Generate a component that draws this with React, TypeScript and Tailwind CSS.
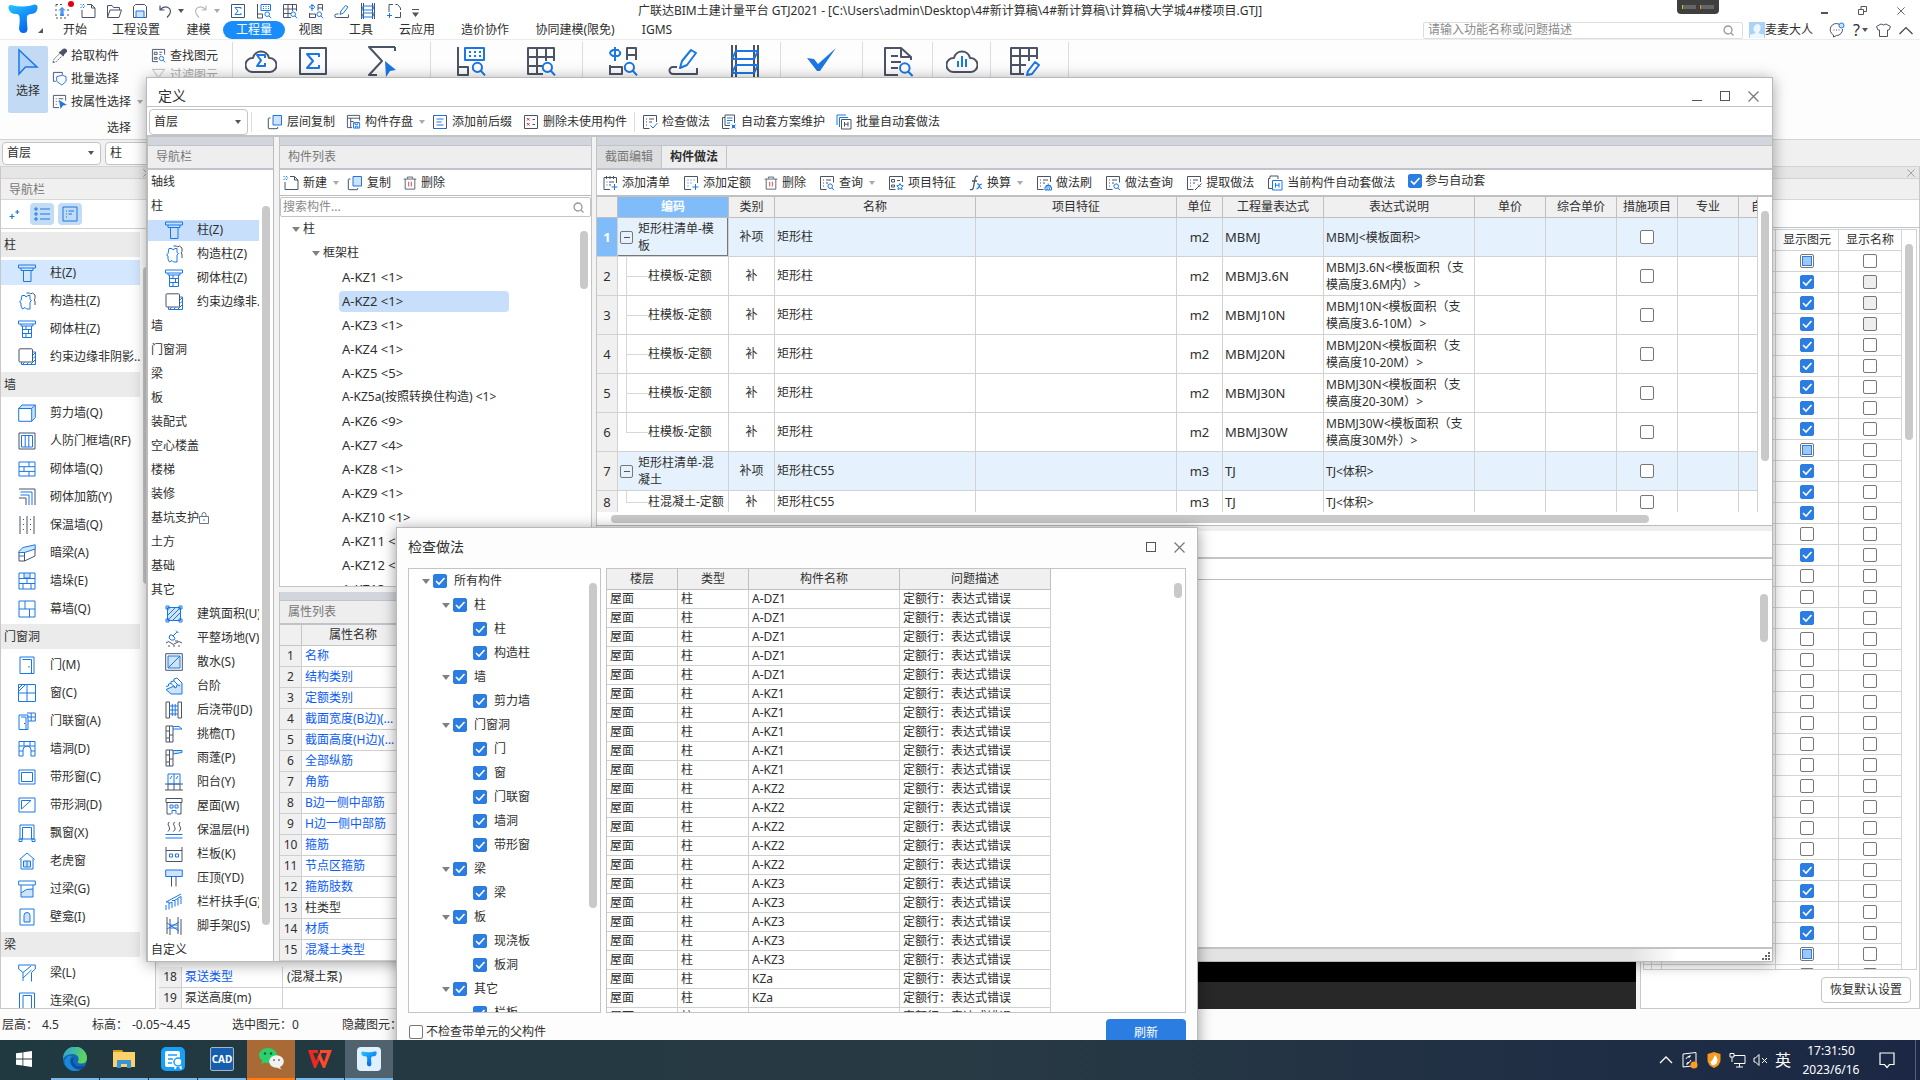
import type { ReactNode } from 'react';

/* ---------- line icons ---------- */

type Glyph = { k?: string; b?: string; f?: string; r?: string; s?: string };

const G: Record<string, Glyph> = {
  // element types, drawn on an 18 x 18 grid
  column: { b: 'M.5 1h17v3H.5zM3 4v2.500h12V4M5.500 6.500V17.500h7.500V6.500' },
  tieColumn: { b: 'M4 3.500h3l1 1.500 2-1.500h2v4l1.500 1-1.500 1.500v4L12 17H8.500L7 15.500 4.500 17 3 14v-3l-1.500-1L3 8.500z', k: 'M8.500 1h3l1 1 2-1L17 3v3.500l-1 1.500 1 1v4' },
  brickColumn: { b: 'M.5 1h17v3H.5zM3 4v2h12V4M4.500 6v11.500h9V6M4.500 9.500h9M4.500 13.500h9M8 6v3.500M10.500 9.500v4M8 13.500v4' },
  edge: { k: 'M2 .8h11.500a1 1 0 0 1 1 1V13a1 1 0 0 1-1 1H2a1 1 0 0 1-1-1V1.800a1 1 0 0 1 1-1z', b: 'M3.500 14v2.500h14V4h-3M4 17l2.500-2.500M8 17l2.500-2.500M12 17l5-5M15 10.500L17.500 8M15 7l2-2' },
  shearWall: { b: 'M.7 4.500h13v12.800h-13zM.7 4.500L4 1h13.300v12.500l-3.600 3.800M13.700 4.500L17.300 1', f: 'M.7 4.500L4 1h13.300v12.500l-3.600 3.800V4.500z' },
  frameWall: { k: 'M1 1h16v16H1z', b: 'M3.500 3.500h11v11.500h-11zM7.200 3.500V15M10.800 3.500V15' },
  brickWall: { b: 'M1 2h16v14H1zM1 6.700h16M1 11.400h16M11 2v4.700M6 6.700v4.700M11 11.400V16' },
  rebarWall: { k: 'M1 1h16v16', b: 'M2.500 4H14v13M2.500 7H11v10', s: 'M1 10h7v7' },
  insulWall: { k: 'M2 0v18M9 0v18M16 0v18', s: 'M5.500 3v1M5.500 8v1M5.500 13v1M12.500 3v1M12.500 8v1M12.500 13v1' },
  hiddenBeam: { k: 'M1 8v9h5.500l10.500-5V5M6.500 8v9', b: 'M.8 7.500L5 3.500 17.200.8V5L6.500 8.500H.8zM1 12h5.500', f: 'M.8 7.500L5 3.500 17.200.8V5L6.500 8.500H.8z' },
  pier: { b: 'M1 1h16v16H1zM6 1v5h6V1M1 6.500h16M1 11.500h16M9 6.500v5M5 11.500v5.500M13 11.500V17', f: 'M6 1h6v5H6z' },
  curtain: { b: 'M1 1h16v16H1zM1 9h16M7 1v8M11.500 9v8' },
  door: { b: 'M2 1h14v16.500H2zM4.500 3.500h9v14', k: 'M11 10v1.500' },
  window: { b: 'M.5.5h17v17H.5zM9 .5v17M.5 9h17M1 7l6-6M1 4l3-3' },
  doorWindow: { b: 'M1 3h9v14.500H1zM3 5h5v12.500M9 1h8.300v8H10M13.200 1v8M9 5h8', k: 'M6.500 11v1' },
  wallHole: { b: 'M1 1.500h16V16h-4V10a4 4 0 0 0-8 0v6H1zM1 6h16M6 1.500V6M12 1.500V6M1 11h4M13 11h4' },
  stripWindow: { b: 'M1 2h16v14H1zM3.500 4.500h11v9h-11z' },
  stripHole: { b: 'M1 2h16v14H1zM3.500 13V4.500H13z' },
  bayWindow: { b: 'M2 1h14v14H2zM4.500 3.500h9V15M4.500 3.500V15M1 15h3v2.500H1zM14 15h3v2.500h-3z' },
  dormer: { b: 'M1.500 7.500L9 1l7.500 6.500M3 7v10h12V7M5.500 9h7v6h-7zM9 9v6', f: 'M5.500 9h7v6h-7z' },
  lintel: { b: 'M.7 1h16.600v4H.7zM3 5v12h12V5M3 13q5-5 12-4', f: 'M3 13q5-5 12-4v8H3z' },
  niche: { b: 'M2 1h14v16H2zM6 14V7.500a3 3 0 0 1 6 0V14z', f: 'M6 14V7.500a3 3 0 0 1 6 0V14z' },
  beam: { b: 'M.7 1h16.600v4L13.500 8.500v9M.7 1v4L5 8.500V17M5 8.500L13 2M5 14l8.500-8' },
  linkBeam: { b: 'M1.500 17.500V1h15v16.500M5 17.500V3.500h8.500v14' },
  area: { b: 'M2.500 2.500h13v13h-13zM1 1h3v3H1zM14 1h3v3h-3zM1 14h3v3H1zM14 14h3v3h-3zM3 10l7-7M3 15L15 3M8 15l7-7', f: 'M2.500 2.500h13v13h-13z' },
  ground: { b: 'M5 6l-1 3 2 2h3l1-2-3-3zM8 7l4-4M11 1.500L13.500 4', k: 'M1 14q3-3 5 0t5 0 6 0M3 17h2M8 17h2M13 17h2M10 12h3' },
  apron: { k: 'M.7.7h16.600v16.600H.7z', b: 'M3 3h12v12H3zM3 15L15 3', f: 'M3 3h12v12H3z' },
  steps: { b: 'M1 9.500l2.500-.5V7L6 6.500v-2L9 4V2l3-1 5 5v11H6l-5-4.500L8 9.500 11 11l1-3.500L15 9M6 6.500L10 10M9 4l3.500 3.500', f: 'M1 12.500l7-3L11 11l1-3.500L17 6v11H6z' },
  pourBand: { k: 'M1 1h3.500v16H1zM13 1h3.500v16H13z', b: 'M4.500 5h8.500M4.500 9h8.500M4.500 13h8.500M7.300 3v12M10.200 3v12' },
  eave: { k: 'M1 1h7v16H1zM4.500 1v16M1 6h3.500M4.500 10H8M1 13h3.500', b: 'M8 1.500h6l3 2.500H8' },
  canopy: { k: 'M1 1h7v16H1zM4.500 1v16M1 6h3.500M4.500 10H8M1 13h3.500', b: 'M8 1.500h9v2L8 5', f: 'M8 1.500h9v2L8 5z' },
  balcony: { b: 'M3 1h12v10H3zM9 1v10M5 6l2-3M11 6l2-3', k: 'M0 11h18M0 17h18M3 11v6M9 11v6M15 11v6' },
  roof: { k: 'M1 1.500h16v4H1zM2 5.500V17M16 5.500V17M2 17h4M12 17h4', b: 'M5 8h3v3H5zM10 8h3v3h-3zM7 17v-3.500h4V17' },
  insulLayer: { k: 'M4 1q-2 2 0 4.500t-1 5M9.500 1q-2 2 0 4.500t-1 5M15 1q-2 2 0 4.500t-1 5', b: 'M.5 13.500h17M.5 17h17' },
  parapet: { k: 'M1 2v14.500h16V2M1 5.500h16', b: 'M4.500 9h3v3h-3zM10.500 9h3v3h-3z' },
  coping: { b: 'M.7 1h16.600v6.500H.7z', f: 'M.7 1h16.600v6.500H.7z', k: 'M6.500 7.500v10M11 7.500v10' },
  handrail: { b: 'M1 9L16 1M1 12v5M1 9h3v7.500M4 10.500L7 9v6M7 7.500h3v6M10 7l3-1.500v7M13 5l3-1.500V11' },
  scaffold: { k: 'M2 0v17M5 2v16M13 0v17M16 2v16', b: 'M2 6l12 8M2 12l12-7M5 8h8M5 11h8' },
  // tool glyphs, drawn on a 16 x 16 grid
  copy: { b: 'M6 1.500h8.500V11H6z', f: 'M6 1.500h8.500V11H6z', k: 'M3.500 4H2a.7.7 0 0 0-.7.7V14a.7.7 0 0 0 .7.700h8a.7.7 0 0 0 .7-.7v-1' },
  newDoc: { k: 'M7 1.500h4.500l3.500 3.500v9.500H2V7M11.500 1.500V5H15', b: 'M.5 1.500h1M3 1.500h1M1.700 3h1M4.200 3h1M.5 4.500h1M3 4.500h1' },
  trash: { k: 'M.8 3.500h14.400M5 3V1.200h6V3M2.500 3.500V15h11V3.500', r: 'M6.500 6.500v5.500M9.500 6.500v5.500' },
  saveComp: { k: 'M14.500 7V1.500h-13v13h5M1.500 4.500h13M5 4.500v10M5 8h3', b: 'M8 9h6.500v6H8zM9.500 9v2h3V9M10 15v-2h2.500v2' },
  affix: { k: 'M3 1.500H1.500v13h13v-13H13', b: 'M3 1.500h10M3 14.500h10M4.500 5h7M4.500 8h5M4.500 11h7' },
  unused: { k: 'M1.500 1.500h13v13h-13zM9.500 5.500H12M9.500 10.500H12', r: 'M4 4l2.500 2.500M6.500 4L4 6.500M4 9l2.500 2.500M6.500 9L4 11.500' },
  checkDoc: { k: 'M14.500 8V1.500h-13v13h6M4 5h1M7 5h5M4 8h1M7 8h3M4 11h1', b: 'M8.500 11.500l2.500 2.500 4.500-5' },
  autoDoc: { k: 'M4 3.500H1.500v11h7M4 1h9.500v8M4 1v10.500h5', b: 'M6 4h5.500M6 6.500h5.500M6 9h3M11.500 11.500h2v2h-2zM11 10.500l3.500 4M14.500 10.500L11 14.500' },
  batch: { b: 'M1 11V1h9M3.500 13V3.500H12', k: 'M5.500 5.500h9.500V15H5.500zM8.500 8v4.500M12 8v4.500M8.500 10.200H12' },
  addList: { k: 'M8 14.500H2V2.500h12.500V8M4.500 1v3M8 1v3M11.500 1v3M4.500 7h1M7 7h5M4.500 10h1M7 10h2', b: 'M12.500 9v6M9.500 12h6' },
  addQuota: { k: 'M8 14.500H1.500v-13h13V8', b: 'M4.500 5h1M7.500 5h1M10.500 5h1M4.500 8h1M7.500 8h1M4.500 11h1M12.500 9v6M9.500 12h6' },
  query: { k: 'M14.500 7.500V1.500h-13v13h6M4 5h1M7 5h5M4 8h1M7 8h2M4 11h1', b: 'M13.500 11.200a2.300 2.300 0 1 1-4.600 0 2.300 2.300 0 0 1 4.600 0zM13 13l2 2.200' },
  feature: { k: 'M14.500 7V1.500h-13v13h6M3.500 4.500h3v2.500h-3zM3.500 10h3v2h-3zM9 5.500h3', b: 'M12 8.500l1 2 2.200.3-1.600 1.500.4 2.200-2-1-2 1 .4-2.200-1.600-1.500 2.200-.3z' },
  brush: { k: 'M14.500 7V1.500h-13v13h6M4 5h1M7 5h5M4 8h1M7 8h2M4 11h1', b: 'M9 12h6.500v3H9zM10 12v-1.500h4.500V12M12.200 10.500V8.500M11 13v2M13.300 13v2' },
  extract: { k: 'M14.500 7V1.500h-13v13h6M4 5h1M7 5h5M4 8h1M7 8h2M4 11h1M9 15l4.500-4.500M12 9.500l2.500 2.500M13.500 10.500L15.500 8.500' },
  autoCur: { k: 'M6 13.500H1.500V3.500H3M3 3.500V1h8v3', b: 'M5.500 5.500h9.500V15H5.500zM8.500 8v4.500M12 8v4.500M8.500 10.200H12' },
  find: { k: 'M14.500 7V1.500h-13v13h6M3.500 4.500h3v2.500h-3zM3.500 10h3v2h-3zM9 4.500h3M9 7h2', b: 'M13.500 11.200a2.300 2.300 0 1 1-4.600 0 2.300 2.300 0 0 1 4.600 0zM13 13l2 2.200' },
  funnel: { k: 'M1.500 1.500h13L9.500 8v6l-3-2V8z' },
  batchSel: { k: 'M4 11H1.500V1.500H11V4', b: 'M5 6l6-1.500L15 6v5l-4.500 4L5 11z' },
  attrSel: { k: 'M14.500 7V1.500h-13v13h6M4 5h1M7 5h5M4 8h1M7 8h1M4 11h1' },
  upload: { k: 'M2 1.500h2M6 1.500h2M2 1.500v2M2 6v2M2 11v2M14 6v2M14 11v2M2 15h2M6 15h2M10 15h2', b: 'M8 13V5M5 7.500L8 4.500l3 3M6 12h4M7 6v7M9 6v7' },
  folder: { k: 'M1.500 14.500V2.500h4.500l1.500 2h6v2.500M1.500 14.500L4 7h11.500L13 14.500z' },
  save: { k: 'M1.500 3.500l2-2h9l2 2v11h-13z', b: 'M4 8h8v6.500H4z', f: 'M4 8h8v6.500H4z' },
  sigma: { k: 'M1.500 1.500h13v13h-13z', b: 'M11 6V4.500H5L8 8l-3 3.500h6V10' },
  gridLook: { k: 'M9 14.500H1.500v-13h13V8M1.500 6h13M1.500 10.500H9M6 1.500v13M10.500 1.500V8', b: 'M13.500 11.200a2.300 2.300 0 1 1-4.600 0 2.300 2.300 0 0 1 4.600 0zM13 13l2 2.200' },
  keyLook: { k: 'M1.500 1v14h5v-4h-5', b: 'M5 1.500h9.500v6H5zM7 3.500h1M9.500 3.500h1M12 3.500h1M7 5.500h1M9.500 5.500h1M12 5.500h1M13.500 11.200a2.300 2.300 0 1 1-4.600 0 2.300 2.300 0 0 1 4.600 0zM13 13l2 2.200' },
  anchorLook: { k: 'M1.500 15v-5M1.500 11h6v3.500h-6M10 7.500V1.500h4.500v6M10 5h4.500', b: 'M4 1v7M6 2.500H3q-3 1.500 0 3h2.500q2-1 .5-2.500M13.500 11.200a2.300 2.300 0 1 1-4.600 0 2.300 2.300 0 0 1 4.600 0zM13 13l2 2.200' },
  pencil: { k: 'M4.500 11H2.500a1.700 1.700 0 0 0 0 3.500h12v-3', b: 'M6 11.500l1-3.500 4.500-5.500L14 4 9.500 10z' },
  ladder: { k: 'M1.500 0v16M3.500 0v16M12.500 0v16M14.500 0v16', b: 'M3.500 3h11M1.500 7h11M3.500 10h11M1.500 14h11M3.500 3l-2 4M14.500 3l-2 4M3.500 10l-2 4M14.500 10l-2 4' },
  frameAdd: { k: 'M3 9V1.500h4M9.500 1.500h2L14.500 5v2M14.500 9v5.500H9', b: 'M3.500 10v5M1 12.500h5' },
  docLook: { k: 'M8 15H1.500V1.500h8L14.500 6v1.500M4.500 5.500h3.500M4.500 8.500h5M4.500 11.500h3.500M9.500 1.500V6h5', b: 'M13.800 11.500a2.400 2.400 0 1 1-4.800 0 2.400 2.400 0 0 1 4.800 0zM13.300 13.500l2 2' },
  cloudSum: { k: 'M3.500 13.500A3.400 3.400 0 0 1 4 6.500a4.100 4.100 0 0 1 8 0 3.400 3.400 0 0 1 .5 7z', b: 'M10 6.500V5H6l2 2.700L6 10.500h4V9' },
  cloudChart: { k: 'M3.500 13.500A3.400 3.400 0 0 1 4 6.500a4.100 4.100 0 0 1 8 0 3.400 3.400 0 0 1 .5 7z', b: 'M6 8v3M8 5.500V11M10 7v4' },
  sumPick: { k: 'M15 1H2l6.500 7L2 15h4M15 1v2' },
  gridPen: { k: 'M8 14.500H1.500v-13h13V7M1.500 5.500h13M1.500 10H9M6 1.500v13M10.500 1.500V8', b: 'M9.500 15l.5-2 3.500-4.500 2 1.500-3.500 4.500z' },
};

function Ico({ n, s = 16, v = 16, faint = false }: { n: string; s?: number; v?: number; faint?: boolean }) {
  const g = G[n];
  return (
    <svg width={s} height={s} viewBox={`0 0 ${v} ${v}`} fill="none" strokeLinejoin="round" className="shrink-0" aria-hidden="true">
      {g.f && <path d={g.f} fill="#cfe4fb" />}
      {g.k && <path d={g.k} stroke={faint ? '#bbb' : '#4b5366'} />}
      {g.s && <path d={g.s} stroke="#4b5366" />}
      {g.b && <path d={g.b} stroke="#1b77e6" />}
      {g.r && <path d={g.r} stroke="#d8343a" />}
    </svg>
  );
}

function Caret({ faint = false }: { faint?: boolean }) {
  return (
    <svg width="6" height="4" viewBox="0 0 6 4" className="shrink-0" aria-hidden="true">
      <path d="M0 0h6L3 4z" fill={faint ? '#aaa' : '#555'} />
    </svg>
  );
}

function TreeArrow() {
  return (
    <svg width="8" height="5" viewBox="0 0 8 5" className="shrink-0" aria-hidden="true">
      <path d="M0 0h8L4 5z" fill="#808080" />
    </svg>
  );
}

function Cross({ s = 11, c = '#777' }: { s?: number; c?: string }) {
  return (
    <svg width={s} height={s} viewBox="0 0 11 11" stroke={c} strokeWidth="1.200" aria-hidden="true">
      <path d="M.5.5l10 10M10.500.5l-10 10" />
    </svg>
  );
}

function Magnifier() {
  return (
    <svg width="11" height="11" viewBox="0 0 11 11" fill="none" stroke="#999" strokeWidth="1.300" aria-hidden="true">
      <circle cx="5" cy="5" r="4" />
      <path d="M8 8l2.500 2.500" />
    </svg>
  );
}

function LogoT({ s }: { s: number }) {
  return (
    <svg width={s} height={s} viewBox="0 0 30 30" aria-hidden="true">
      <defs>
        <linearGradient id={`t${s}`} x1="0" y1="0" x2=".6" y2="1">
          <stop offset="0" stopColor="#27c8fb" />
          <stop offset=".5" stopColor="#1392f8" />
          <stop offset="1" stopColor="#0a63ee" />
        </linearGradient>
      </defs>
      <path d="M3 1q6 1.500 12 1.500T26.500.5q3.500 0 3 4-1 5-6 5.500-4 0-4.500 2.500t.5 12q0 4.500-4 4.500T11 24.500q1-8 .5-11.500T8 10Q2 10 .5 4.500 0 1 3 1z" fill={`url(#t${s})`} />
    </svg>
  );
}

/* ---------- controls ---------- */

type CheckState = 'on' | 'off' | 'part' | 'dim';

function Check({ state, label }: { state: CheckState; label?: string }) {
  return (
    <span className="grid size-3.5 shrink-0">
      <input
        type="checkbox"
        aria-label={label}
        defaultChecked={state === 'on'}
        disabled={state === 'dim'}
        className="col-start-1 row-start-1 size-3.5 appearance-none rounded-xs border border-[#777] bg-white checked:border-[#2b7de1] checked:bg-[#2b7de1] disabled:bg-[#eee]"
      />
      {state === 'on' && (
        <svg viewBox="0 0 14 14" className="pointer-events-none col-start-1 row-start-1 size-3.5" fill="none" stroke="#fff" strokeWidth="1.600" aria-hidden="true">
          <path d="M3 7l3 3 5.500-6" />
        </svg>
      )}
      {state === 'part' && <span className="pointer-events-none col-start-1 row-start-1 m-0.5 border border-[#2b7de1] bg-[#9cc8fb]" />}
    </span>
  );
}

function Tool({ icon, label, caret = false }: { icon: ReactNode; label: string; caret?: boolean }) {
  return (
    <button type="button" className="flex shrink-0 items-center gap-1 whitespace-nowrap">
      {icon}
      <span>{label}</span>
      {caret && (
        <span className="ml-0.5">
          <Caret faint />
        </span>
      )}
    </button>
  );
}

function Select({ label, options, className }: { label: string; options: string[]; className: string }) {
  return (
    <span className={`relative flex items-center rounded-sm border border-[#c4c4c4] bg-white ${className}`}>
      <select aria-label={label} className="h-full w-full appearance-none bg-transparent pl-1 outline-none">
        {options.map((o) => (
          <option key={o}>{o}</option>
        ))}
      </select>
      <span className="pointer-events-none absolute right-1.5">
        <Caret />
      </span>
    </span>
  );
}

/* ---------- main window ---------- */

const quick = ['upload', 'newDoc', 'folder', 'save'];
const quick2 = ['sigma', 'keyLook', 'gridLook', 'anchorLook', 'pencil', 'ladder', 'frameAdd'];

function TitleBar() {
  return (
    <header className="flex h-10 shrink-0 border-b border-[#ececec] bg-white">
      <div className="flex w-[52px] items-start pt-1 pl-2">
        <LogoT s={30} />
        <svg width="5" height="5" viewBox="0 0 5 5" className="mt-6" aria-hidden="true">
          <path d="M5 0v5H0z" fill="#555" />
        </svg>
      </div>
      <div className="flex min-w-0 flex-1 flex-col">
        <div className="flex h-[22px] items-center">
          <div className="flex w-[586px] shrink-0 items-center gap-2.5 pl-0.5">
            {quick.map((q) => (
              <button key={q} type="button" aria-label={q} className="relative">
                <Ico n={q} />
                {q === 'upload' && <span className="absolute -top-0.5 -right-1 size-1.5 rounded-full bg-red-600" />}
              </button>
            ))}
            <button type="button" aria-label="undo" className="flex items-center gap-1.5">
              <svg width="14" height="14" viewBox="0 0 14 14" fill="none" stroke="#4b5366" strokeWidth="1.200" aria-hidden="true">
                <path d="M2 1.500v4.500h4.500M2 6q4-4.500 8-2.500t1.500 7L9 13.500" />
              </svg>
              <Caret />
            </button>
            <button type="button" aria-label="redo" className="flex items-center gap-1.5">
              <svg width="14" height="14" viewBox="0 0 14 14" fill="none" stroke="#bbb" strokeWidth="1.200" aria-hidden="true">
                <path d="M12 1.500v4.500H7.500M12 6Q8 1.500 4 3.500t-1.500 7L5 13.500" />
              </svg>
              <Caret faint />
            </button>
            {quick2.map((q) => (
              <button key={q} type="button" aria-label={q}>
                <Ico n={q} />
              </button>
            ))}
            <svg width="7" height="8" viewBox="0 0 7 8" className="mt-1" aria-hidden="true">
              <path d="M0 0h7v1H0zM0 3.500h7L3.500 8z" fill="#555" />
            </svg>
          </div>
          <h1 className="min-w-0 flex-1 truncate">广联达BIM土建计量平台 GTJ2021 - [C:\Users\admin\Desktop\4#新计算稿\4#新计算稿\计算稿\大学城4#楼项目.GTJ]</h1>
          <div className="flex h-3.5 w-[42px] items-center justify-center gap-1 self-start rounded-b bg-[#3f3f3f]">
            <span className="h-1 w-3.5 border-l border-lime-400 bg-[#666]" />
            <span className="h-1 w-3.5 border-l border-orange-400 bg-[#666]" />
          </div>
          <div className="ml-[102px] flex items-center gap-[30px] pr-[15px]">
            <button type="button" aria-label="minimize" className="mt-1 h-0.5 w-[7px] bg-[#555]" />
            <button type="button" aria-label="restore">
              <svg width="9" height="9" viewBox="0 0 9 9" fill="none" stroke="#555" aria-hidden="true">
                <path d="M.5 3.500h5v5h-5zM3 3V.5h5.500v5H6" />
              </svg>
            </button>
            <button type="button" aria-label="close">
              <Cross s={8} c="#555" />
            </button>
          </div>
        </div>
        <div className="flex h-[18px] items-center">
          <nav className="flex items-center">
            {[
              ['开始', 'w-[46px]'],
              ['工程设置', 'w-[76px]'],
              ['建模', 'w-[49px]'],
              ['工程量', 'w-[62px]'],
              ['视图', 'w-[51px]'],
              ['工具', 'w-[50px]'],
              ['云应用', 'w-[62px]'],
              ['造价协作', 'w-[74px]'],
              ['协同建模(限免)', 'w-[106px]'],
              ['IGMS', 'w-[58px]'],
            ].map(([t, w]) => (
              <a
                key={t}
                href="#"
                className={`shrink-0 text-center leading-[18px] whitespace-nowrap ${w} ${t === '工程量' ? 'rounded-full bg-[#188dfa] text-white' : ''}`}
              >
                {t}
              </a>
            ))}
          </nav>
          <div className="flex-1" />
          <label className="flex h-[17px] w-80 items-center rounded-xs border border-[#ddd] pr-2 pl-1">
            <input aria-label="搜索功能" placeholder="请输入功能名称或问题描述" className="min-w-0 flex-1 outline-none placeholder:text-[#8a8a8a]" />
            <Magnifier />
          </label>
          <svg width="16" height="16" viewBox="0 0 16 16" className="ml-1.5" aria-hidden="true">
            <path d="M0 0h16v16H0z" fill="#a9d3fb" />
            <path d="M8 2q4 0 3.500 4T9.500 10q0 2 5.500 2.500V16H1v-3.500Q6.500 12 6.500 10 4 9 4.500 6T8 2z" fill="#eef7ff" />
          </svg>
          <span>麦麦大人</span>
          <div className="ml-4 flex items-center gap-2 pr-[7px]">
            <button type="button" aria-label="message">
              <svg width="16" height="16" viewBox="0 0 16 16" fill="none" stroke="#4b5366" aria-hidden="true">
                <path d="M10 2.200A6 6 0 1 0 4.500 13v2l3-1.500A6 6 0 0 0 13.500 7M4.500 8h1M7 8h1M9.500 8h1" />
                <circle cx="12.500" cy="3.500" r="2.500" stroke="#1b77e6" fill="#cfe4fb" />
              </svg>
            </button>
            <button type="button" aria-label="help" className="flex items-center gap-0.5 text-base">
              ?<Caret />
            </button>
            <button type="button" aria-label="skin">
              <svg width="15" height="14" viewBox="0 0 15 14" fill="none" stroke="#4b5366" aria-hidden="true">
                <path d="M5 1q2.500 2 5 0l4.500 2.500L13 7h-1.500v6.500h-8V7H2L.5 3.500z" />
              </svg>
            </button>
            <button type="button" aria-label="collapse">
              <svg width="14" height="9" viewBox="0 0 14 9" fill="none" stroke="#444" strokeWidth="1.200" aria-hidden="true">
                <path d="M.5 8L7 1.500 13.500 8" />
              </svg>
            </button>
          </div>
        </div>
      </div>
    </header>
  );
}

const groups: { w: string; icons: string[] }[] = [
  { w: 'w-[198px] gap-5 pl-3', icons: ['cloudSum', 'sigma', 'sumPick'] },
  { w: 'w-[152px] gap-[38px] pl-6', icons: ['keyLook', 'gridLook'] },
  { w: 'w-[198px] gap-[29px] pl-6', icons: ['anchorLook', 'pencil', 'ladder'] },
  { w: 'w-[82px] justify-center', icons: ['check'] },
  { w: 'w-[70px] justify-center', icons: ['docLook'] },
  { w: 'w-[58px] justify-center', icons: ['cloudChart'] },
  { w: 'w-[78px] pl-[17px]', icons: ['gridPen'] },
];

function Ribbon() {
  return (
    <div className="flex h-[99px] shrink-0 bg-[#fdfdfd]">
      <div className="flex w-[232px] flex-col">
        <div className="flex h-[74px] pt-1 pl-2">
          <button type="button" className="mt-0.5 flex h-[67px] w-10 flex-col items-center gap-[7px] rounded-xs bg-[#c2daf4] pt-0.5">
            <svg width="22" height="28" viewBox="0 0 22 28" fill="none" stroke="#1b77e6" strokeWidth="1.500" aria-hidden="true">
              <path d="M2 2v24l6.500-7H20z" fill="#b1d4f8" />
            </svg>
            选择
          </button>
          <div className="flex flex-col pl-1 [&>*]:h-[23px]">
            <Tool
              label="拾取构件"
              icon={
                <svg width="15" height="16" viewBox="0 0 16 16" aria-hidden="true">
                  <path d="M1 15l1-3.500L8.500 5l2.500 2.500L4.500 14z" fill="none" stroke="#4b5366" strokeDasharray="2 1" />
                  <path d="M7 4l2-1 2.500-2.500Q14-.5 15.500 1t0 3L13 6.500l-.5 2z" fill="#4b5366" />
                </svg>
              }
            />
            <Tool label="批量选择" icon={<Ico n="batchSel" s={15} />} />
            <Tool
              label="按属性选择"
              caret
              icon={
                <span className="relative">
                  <Ico n="attrSel" s={15} />
                  <svg width="8" height="9" viewBox="0 0 8 9" className="absolute right-0 bottom-0" aria-hidden="true">
                    <path d="M0 0l8 5-4 .5L1.500 9z" fill="#1b77e6" />
                  </svg>
                </span>
              }
            />
          </div>
          <div className="flex flex-col pl-2 [&>*]:h-[23px]">
            <Tool label="查找图元" icon={<Ico n="find" s={15} />} />
            <span className="text-[#aaa]">
              <Tool label="过滤图元" icon={<Ico n="funnel" s={15} faint />} />
            </span>
          </div>
        </div>
        <div className="pt-1.5 pl-[107px]">选择</div>
      </div>
      {groups.map((g) => (
        <div key={g.icons[0]} className={`mt-0.5 flex h-[92px] items-start border-l border-[#ddd] pt-[3px] ${g.w}`}>
          {g.icons.map((i) => (
            <button key={i} type="button" aria-label={i} className={i === 'sumPick' ? 'relative ml-4' : ''}>
              {i === 'check' ? (
                <svg width="32" height="28" viewBox="0 0 32 28" aria-hidden="true">
                  <path d="M1 13l7 1 4 5L30 3 14 26h-3z" fill="#1b77e6" />
                </svg>
              ) : (
                <Ico n={i} s={32} />
              )}
              {i === 'sumPick' && (
                <svg width="13" height="16" viewBox="0 0 13 16" className="absolute right-0 bottom-0" aria-hidden="true">
                  <path d="M1 0l11 9-6 1-4 6z" fill="#1b77e6" />
                </svg>
              )}
            </button>
          ))}
        </div>
      ))}
      <div className="mt-0.5 h-[92px] border-l border-[#ddd]" />
    </div>
  );
}

type Item = [string, string];
const mainNav: { title: string; items: Item[] }[] = [
  { title: '柱', items: [['column', '柱(Z)'], ['tieColumn', '构造柱(Z)'], ['brickColumn', '砌体柱(Z)'], ['edge', '约束边缘非阴影..']] },
  {
    title: '墙',
    items: [['shearWall', '剪力墙(Q)'], ['frameWall', '人防门框墙(RF)'], ['brickWall', '砌体墙(Q)'], ['rebarWall', '砌体加筋(Y)'], ['insulWall', '保温墙(Q)'], ['hiddenBeam', '暗梁(A)'], ['pier', '墙垛(E)'], ['curtain', '幕墙(Q)']],
  },
  {
    title: '门窗洞',
    items: [['door', '门(M)'], ['window', '窗(C)'], ['doorWindow', '门联窗(A)'], ['wallHole', '墙洞(D)'], ['stripWindow', '带形窗(C)'], ['stripHole', '带形洞(D)'], ['bayWindow', '飘窗(X)'], ['dormer', '老虎窗'], ['lintel', '过梁(G)'], ['niche', '壁龛(I)']],
  },
  { title: '梁', items: [['beam', '梁(L)'], ['linkBeam', '连梁(G)']] },
];

function MainNav() {
  return (
    <aside className="flex w-[156px] shrink-0 flex-col border-x border-b border-[#c8c8c8] bg-white">
      <div className="flex h-3 shrink-0 items-center justify-end border-b border-[#d4d4d4] bg-[#e6e6e6] pr-1">
        <Cross s={8} c="#999" />
      </div>
      <h2 className="h-[21px] shrink-0 border-b border-[#d8d8d8] bg-[#f0f0f0] pl-2 leading-[21px] text-[#777]">导航栏</h2>
      <div className="flex h-[29px] shrink-0 items-center gap-1 border-b border-[#d0d0d0] pl-px">
        <button type="button" aria-label="add" className="flex w-6 justify-center">
          <svg width="11" height="11" viewBox="0 0 11 11" stroke="#1b77e6" strokeWidth="1.200" aria-hidden="true">
            <path d="M3 5v5M.5 7.500h5M8.300 1v4M6.300 3h4" />
          </svg>
        </button>
        <button type="button" aria-label="list" className="flex h-[22px] w-6 items-center justify-center rounded-sm bg-[#c2dcf6]">
          <svg width="16" height="14" viewBox="0 0 16 14" fill="none" stroke="#1b77e6" aria-hidden="true">
            <path d="M1 1h2v2H1zM1 6h2v2H1zM1 11h2v2H1zM6 2h10M6 7h10M6 12h10" />
          </svg>
        </button>
        <button type="button" aria-label="detail" className="flex h-[22px] w-6 items-center justify-center rounded-sm bg-[#c2dcf6]">
          <svg width="16" height="16" viewBox="0 0 16 16" fill="none" stroke="#1b77e6" aria-hidden="true">
            <path d="M1 1h14v14H1zM4 5h1M6.500 5H12M4 8h1M6.500 8H10M4 11h1" />
          </svg>
        </button>
      </div>
      <div className="flex min-h-0 flex-1 overflow-hidden pt-[3px]">
        <div className="w-[139px] shrink-0">
          {mainNav.map((g) => (
            <div key={g.title}>
              <h3 className="mb-[3px] h-[25px] bg-[#ebebeb] pl-[3px] leading-[25px]">{g.title}</h3>
              {g.items.map(([icon, t]) => (
                <a key={t} href="#" className={`mb-[3px] flex h-[25px] items-center gap-3.5 overflow-hidden pl-[17px] whitespace-nowrap ${t === '柱(Z)' ? 'bg-[#d3e7fe]' : ''}`}>
                  <Ico n={icon} s={18} v={18} />
                  {t}
                </a>
              ))}
            </div>
          ))}
        </div>
        <div className="mt-[35px] ml-[3px] h-[317px] w-2 rounded-full bg-[#c9c9c9]" />
      </div>
    </aside>
  );
}

const shown: CheckState[] = [
  'part', 'on', 'on', 'on', 'on', 'on', 'on', 'on', 'on', 'part', 'on', 'on', 'on', 'off', 'on', 'off', 'off', 'on',
  'off', 'off', 'off', 'off', 'off', 'off', 'off', 'off', 'off', 'off', 'off', 'on', 'on', 'on', 'on', 'part', 'off',
];

function DisplayPanel() {
  return (
    <aside className="flex w-[280px] shrink-0 flex-col border border-t-0 border-[#c8c8c8] bg-white">
      <div className="flex h-3 shrink-0 items-center justify-end border-b border-[#d4d4d4] bg-[#e6e6e6] pr-1">
        <Cross s={8} c="#999" />
      </div>
      <div className="h-[21px] shrink-0 border-b border-[#d8d8d8] bg-[#f0f0f0]" />
      <div className="h-[28px] shrink-0 border-b border-[#bfc3cc]" />
      <div className="mt-px mr-0.5 mb-0.5 ml-0.5 flex min-h-0 flex-1 overflow-hidden border border-[#d0d0d0]">
        <table className="w-full table-fixed border-separate border-spacing-0 self-start">
          <colgroup>
            <col className="w-2" />
            <col className="w-2.5" />
            <col />
            <col className="w-[63px]" />
            <col className="w-[63px]" />
          </colgroup>
          <thead>
            <tr className="[&>th]:h-[21px] [&>th]:border-r [&>th]:border-b [&>th]:border-[#d4d4d4] [&>th]:p-0 [&>th]:font-normal [&>th]:whitespace-nowrap">
              <th />
              <th />
              <th />
              <th>显示图元</th>
              <th>显示名称</th>
            </tr>
          </thead>
          <tbody>
            {shown.map((s, i) => (
              <tr key={i} className="[&>td]:h-[21px] [&>td]:border-r [&>td]:border-b [&>td]:border-[#d4d4d4] [&>td]:p-0">
                <td />
                <td />
                <td />
                <td>
                  <span className="flex justify-center">
                    <Check state={s} label={`显示图元 ${i + 1}`} />
                  </span>
                </td>
                <td>
                  <span className="flex justify-center">
                    <Check state={i > 0 && i < 4 ? 'dim' : 'off'} label={`显示名称 ${i + 1}`} />
                  </span>
                </td>
              </tr>
            ))}
          </tbody>
        </table>
        <div className="mx-[3px] mt-3.5 h-[196px] w-2 shrink-0 rounded-full bg-[#c9c9c9]" />
      </div>
      <div className="flex shrink-0 justify-end pt-[5px] pr-2 pb-[5px]">
        <button type="button" className="h-[26px] rounded border border-[#c4c4c4] bg-white px-2">
          恢复默认设置
        </button>
      </div>
    </aside>
  );
}

function MainProps() {
  return (
    <section className="ml-[3px] flex w-[300px] shrink-0 flex-col justify-end bg-white">
      <table className="w-full table-fixed border-separate border-spacing-0">
        <colgroup>
          <col className="w-[23px]" />
          <col className="w-[101px]" />
          <col />
        </colgroup>
        <tbody>
          {[
            ['18', '泵送类型', '(混凝土泵)'],
            ['19', '泵送高度(m)', ''],
          ].map(([n, k, v]) => (
            <tr key={n} className="[&>td]:h-[21px] [&>td]:border-r [&>td]:border-b [&>td]:border-[#d0d0d0] [&>td]:p-0">
              <td className="bg-[#f0f0f0] text-center">{n}</td>
              <td>
                <span className={`pl-[3px] ${n === '18' ? 'text-[#0a5cf5]' : ''}`}>{k}</span>
              </td>
              <td>
                <span className="pl-1">{v}</span>
              </td>
            </tr>
          ))}
        </tbody>
      </table>
    </section>
  );
}

/* ---------- 定义 window ---------- */

const defNav: (string | Item)[] = [
  '轴线', '柱', ['column', '柱(Z)'], ['tieColumn', '构造柱(Z)'], ['brickColumn', '砌体柱(Z)'], ['edge', '约束边缘非..'],
  '墙', '门窗洞', '梁', '板', '装配式', '空心楼盖', '楼梯', '装修', '基坑支护', '土方', '基础', '其它',
  ['area', '建筑面积(U)'], ['ground', '平整场地(V)'], ['apron', '散水(S)'], ['steps', '台阶'], ['pourBand', '后浇带(JD)'], ['eave', '挑檐(T)'],
  ['canopy', '雨蓬(P)'], ['balcony', '阳台(Y)'], ['roof', '屋面(W)'], ['insulLayer', '保温层(H)'], ['parapet', '栏板(K)'], ['coping', '压顶(YD)'],
  ['handrail', '栏杆扶手(G)'], ['scaffold', '脚手架(JS)'], '自定义',
];

function PanelHead({ title }: { title: string }) {
  return (
    <div className="shrink-0">
      <div className="h-[9px] border-b border-[#c0c3ca] bg-[#d3d5dc]" />
      <h2 className="h-[24px] border-b-2 border-[#c0c3ca] bg-[#eee] pl-2 leading-[22px] text-[#777]">{title}</h2>
    </div>
  );
}

function DefNav() {
  return (
    <section className="flex w-[127px] shrink-0 flex-col border-x border-[#bbb] bg-white">
      <PanelHead title="导航栏" />
      <div className="flex min-h-0 flex-1 overflow-hidden">
        <div className="w-[111px] shrink-0">
          {defNav.map((e) =>
            typeof e === 'string' ? (
              <div key={`h${e}`} className="flex h-6 items-center pl-[3px]">
                {e}
                {e === '基坑支护' && (
                  <svg width="10" height="12" viewBox="0 0 10 12" fill="none" stroke="#6b7688" aria-hidden="true">
                    <path d="M.5 4.500h9v7h-9zM3 4.500v-2q0-2 2-2t2 2v2M5 7v2" />
                  </svg>
                )}
              </div>
            ) : (
              <a key={e[1]} href="#" className="flex h-6 items-center">
                <span className={`flex h-[21px] w-full items-center gap-3.5 overflow-hidden pl-[17px] whitespace-nowrap ${e[1] === '柱(Z)' ? 'bg-[#c7dffa]' : ''}`}>
                  <Ico n={e[0]} s={18} v={18} />
                  {e[1]}
                </span>
              </a>
            ),
          )}
        </div>
        <div className="mt-9 mb-9 ml-[3px] w-2 rounded-full bg-[#c9c9c9]" />
      </div>
    </section>
  );
}

const comps = ['A-KZ1 <1>', 'A-KZ2 <1>', 'A-KZ3 <1>', 'A-KZ4 <1>', 'A-KZ5 <5>', 'A-KZ5a(按照转换住构造) <1>', 'A-KZ6 <9>', 'A-KZ7 <4>', 'A-KZ8 <1>', 'A-KZ9 <1>', 'A-KZ10 <1>', 'A-KZ11 <1>', 'A-KZ12 <1>', 'A-KZ13 <1>'];
const propNames = ['名称', '结构类别', '定额类别', '截面宽度(B边)(...', '截面高度(H边)(...', '全部纵筋', '角筋', 'B边一侧中部筋', 'H边一侧中部筋', '箍筋', '节点区箍筋', '箍筋肢数', '柱类型', '材质', '混凝土类型'];

function CompColumn() {
  return (
    <div className="mr-1 ml-[5px] flex w-[313px] shrink-0 flex-col">
      <section className="flex h-[450px] flex-col border-x border-b border-[#c4c4c4] bg-white">
        <PanelHead title="构件列表" />
        <div className="flex h-[26px] shrink-0 items-center border-b border-[#bbb] pl-[3px]">
          <Tool icon={<Ico n="newDoc" />} label="新建" caret />
          <div className="w-2" />
          <Tool icon={<Ico n="copy" />} label="复制" />
          <div className="w-3" />
          <Tool icon={<Ico n="trash" s={14} />} label="删除" />
        </div>
        <label className="mt-px flex h-[20px] shrink-0 items-center rounded-xs border border-[#c4c4c4] pr-1.5 pl-0.5">
          <input aria-label="搜索构件" placeholder="搜索构件..." className="min-w-0 flex-1 outline-none placeholder:text-[#8a8a8a]" />
          <Magnifier />
        </label>
        <div className="flex min-h-0 flex-1 justify-between overflow-hidden">
          <ul className="[&>li]:flex [&>li]:h-6 [&>li]:items-center">
            <li className="gap-[3px] pl-3">
              <TreeArrow />柱
            </li>
            <li className="gap-[3px] pl-8">
              <TreeArrow />
              框架柱
            </li>
            {comps.map((c) => (
              <li key={c} className="pl-[59px]">
                <span className={`h-[21px] w-[170px] rounded-sm pl-[3px] leading-5 whitespace-nowrap ${c.length < 12 ? 'text-[13px]' : ''} ${c === 'A-KZ2 <1>' ? 'bg-[#c7dffa]' : ''}`}>{c}</span>
              </li>
            ))}
          </ul>
          <div className="mt-3.5 mr-[3px] h-[58px] w-2 rounded-full bg-[#c9c9c9]" />
        </div>
      </section>
      <section className="mt-[5px] flex min-h-0 flex-1 flex-col overflow-hidden border-x border-[#c4c4c4] bg-white">
        <PanelHead title="属性列表" />
        <table className="w-full table-fixed border-separate border-spacing-0">
          <colgroup>
            <col className="w-[22px]" />
            <col className="w-[103px]" />
            <col />
          </colgroup>
          <thead>
            <tr className="bg-[#f0f0f0] [&>th]:h-[21px] [&>th]:border-r [&>th]:border-b [&>th]:border-[#c6c6c6] [&>th]:p-0 [&>th]:font-normal">
              <th />
              <th>属性名称</th>
              <th>属性值</th>
            </tr>
          </thead>
          <tbody>
            {propNames.map((p, i) => (
              <tr key={p} className="[&>td]:h-[21px] [&>td]:border-r [&>td]:border-b [&>td]:border-[#cfcfcf] [&>td]:p-0">
                <td className="bg-[#f0f0f0] text-center">{i + 1}</td>
                <td className="whitespace-nowrap">
                  <span className={`pl-[3px] ${p === '柱类型' ? '' : 'text-[#0a5cf5]'}`}>{p}</span>
                </td>
                <td />
              </tr>
            ))}
          </tbody>
        </table>
      </section>
    </div>
  );
}

type Row = { parent?: boolean; last?: boolean; code: string; kind: string; name: string; unit: string; expr: string; desc: string };
const rows: Row[] = [
  { parent: true, code: '矩形柱清单-模板', kind: '补项', name: '矩形柱', unit: 'm2', expr: 'MBMJ', desc: 'MBMJ<模板面积>' },
  { code: '柱模板-定额', kind: '补', name: '矩形柱', unit: 'm2', expr: 'MBMJ3.6N', desc: 'MBMJ3.6N<模板面积（支模高度3.6M内）>' },
  { code: '柱模板-定额', kind: '补', name: '矩形柱', unit: 'm2', expr: 'MBMJ10N', desc: 'MBMJ10N<模板面积（支模高度3.6-10M）>' },
  { code: '柱模板-定额', kind: '补', name: '矩形柱', unit: 'm2', expr: 'MBMJ20N', desc: 'MBMJ20N<模板面积（支模高度10-20M）>' },
  { code: '柱模板-定额', kind: '补', name: '矩形柱', unit: 'm2', expr: 'MBMJ30N', desc: 'MBMJ30N<模板面积（支模高度20-30M）>' },
  { last: true, code: '柱模板-定额', kind: '补', name: '矩形柱', unit: 'm2', expr: 'MBMJ30W', desc: 'MBMJ30W<模板面积（支模高度30M外）>' },
  { parent: true, code: '矩形柱清单-混凝土', kind: '补项', name: '矩形柱C55', unit: 'm3', expr: 'TJ', desc: 'TJ<体积>' },
  { last: true, code: '柱混凝土-定额', kind: '补', name: '矩形柱C55', unit: 'm3', expr: 'TJ', desc: 'TJ<体积>' },
];

function PracticeTable() {
  return (
    <table className="w-full table-fixed border-separate border-spacing-0 self-start">
      <colgroup>
        <col className="w-[21px]" />
        <col className="w-[111px]" />
        <col className="w-[46px]" />
        <col className="w-[201px]" />
        <col className="w-[201px]" />
        <col className="w-[46px]" />
        <col className="w-[101px]" />
        <col className="w-[151px]" />
        <col className="w-[71px]" />
        <col className="w-[71px]" />
        <col className="w-[61px]" />
        <col className="w-[61px]" />
        <col />
      </colgroup>
      <thead>
        <tr className="bg-[#f0f0f0] [&>th]:h-[21px] [&>th]:border-r [&>th]:border-b [&>th]:border-[#bfbfbf] [&>th]:p-0 [&>th]:font-normal [&>th]:whitespace-nowrap">
          <th />
          <th className="bg-[#80bbfa] text-white">
            <b>编码</b>
          </th>
          {['类别', '名称', '项目特征', '单位', '工程量表达式', '表达式说明', '单价', '综合单价', '措施项目', '专业'].map((h) => (
            <th key={h}>{h}</th>
          ))}
          <th className="overflow-hidden text-left">
            <span className="pl-3">自</span>
          </th>
        </tr>
      </thead>
      <tbody>
        {rows.map((r, i) => (
          <tr
            key={i}
            className={`[&>td]:border-r [&>td]:border-b [&>td]:border-[#d2d2d2] [&>td]:p-0 ${i === 7 ? '[&>td]:h-[23px]' : '[&>td]:h-[39px]'} ${r.parent ? 'bg-[#e5f2fe]' : 'bg-white'}`}
          >
            <td className={`text-center text-[13px] ${i === 0 ? 'bg-[#80bbfa] font-bold text-white' : 'bg-[#f0f0f0]'}`}>{i + 1}</td>
            <td className={i === 0 ? 'shadow-[inset_-1px_-1px_0_#777]' : ''}>
              {r.parent ? (
                <span className="flex items-center gap-[5px] pl-0.5 leading-[17px]">
                  <button type="button" aria-label="collapse row" className="flex size-[13px] shrink-0 items-center justify-center rounded-xs border border-[#777]">
                    <span className="h-px w-1.5 bg-[#555]" />
                  </button>
                  <span className="w-20">{r.code}</span>
                </span>
              ) : (
                <span className={`flex pl-2 ${i === 7 ? 'h-[22px]' : 'h-[38px]'}`}>
                  <span className="flex w-[22px] shrink-0 flex-col">
                    <span className="flex-1 border-b border-l border-[#d8d8d8]" />
                    <span className={`flex-1 border-[#d8d8d8] ${r.last ? '' : 'border-l'}`} />
                  </span>
                  <span className="self-center whitespace-nowrap">{r.code}</span>
                </span>
              )}
            </td>
            <td className="text-center">{r.kind}</td>
            <td>
              <span className="pl-0.5">{r.name}</span>
            </td>
            <td />
            <td className="text-center text-[13px]">{r.unit}</td>
            <td>
              <span className="pl-0.5 text-[13px]">{r.expr}</span>
            </td>
            <td className="overflow-hidden leading-[17px]">
              <p className="w-[143px] pl-0.5 break-all">{r.desc}</p>
            </td>
            <td />
            <td />
            <td>
              <span className="flex justify-center">
                <Check state="off" label={`措施项目 ${i + 1}`} />
              </span>
            </td>
            <td />
            <td />
          </tr>
        ))}
      </tbody>
    </table>
  );
}

function PracticeColumn() {
  return (
    <section className="flex min-w-0 flex-1 flex-col border-l border-[#c4c4c4] bg-white">
      <div className="h-[9px] shrink-0 border-b border-[#c0c3ca] bg-[#d3d5dc]" />
      <div className="flex h-6 shrink-0 border-b-2 border-[#c0c3ca] bg-[#eee]">
        <button type="button" className="border-r border-[#c4c4c4] bg-[#dcdddf] px-2 text-[#777]">
          截面编辑
        </button>
        <button type="button" className="border-r border-[#c4c4c4] px-2 font-bold">
          构件做法
        </button>
      </div>
      <div className="flex h-[27px] shrink-0 items-center gap-[13px] overflow-hidden border-b-2 border-[#c0c0c0] pl-[5px]">
        <Tool icon={<Ico n="addList" />} label="添加清单" />
        <Tool icon={<Ico n="addQuota" />} label="添加定额" />
        <Tool icon={<Ico n="trash" s={14} />} label="删除" />
        <Tool icon={<Ico n="query" />} label="查询" caret />
        <Tool icon={<Ico n="feature" />} label="项目特征" />
        <Tool
          icon={
            <svg width="14" height="16" viewBox="0 0 14 16" fill="none" aria-hidden="true">
              <path d="M9 1.500Q6.500 0 6 4L4.500 12Q4 15.500 1 14.500M3 6h5" stroke="#4b5366" strokeWidth="1.300" />
              <path d="M8 9q2-.5 2.500 2t2.500 2.500M13 9q-2 0-3 2.500T7.500 14" stroke="#1b77e6" strokeWidth="1.200" />
            </svg>
          }
          label="换算"
          caret
        />
        <Tool icon={<Ico n="brush" />} label="做法刷" />
        <Tool icon={<Ico n="query" />} label="做法查询" />
        <Tool icon={<Ico n="extract" />} label="提取做法" />
        <Tool icon={<Ico n="autoCur" />} label="当前构件自动套做法" />
        <label className="flex items-center gap-[3px] pb-[3px] whitespace-nowrap">
          <Check state="on" />
          参与自动套
        </label>
      </div>
      <div className="flex h-[315px] shrink-0 overflow-hidden">
        <PracticeTable />
        <div className="mt-3.5 mr-[3px] ml-[3px] h-[250px] w-2 shrink-0 rounded-full bg-[#c9c9c9]" />
      </div>
      <div className="h-3.5 shrink-0 border-b border-[#bbb] pt-[3px] pr-[123px] pl-3.5">
        <div className="h-2 rounded-full bg-[#c9c9c9]" />
      </div>
      <div className="h-[5px] shrink-0 bg-[#efefef]" />
      <div className="h-[28px] shrink-0 border-b-2 border-[#c3c5ca]" />
      <div className="h-[21px] shrink-0 border-b border-[#bbb]" />
      <div className="flex flex-1 justify-end pt-3.5 pr-1">
        <div className="h-[48px] w-2 rounded-full bg-[#c9c9c9]" />
      </div>
      <div className="flex h-3.5 shrink-0 items-center justify-end border-t-2 border-[#c3c3c3] bg-gradient-to-r from-[#e3e3e3] from-88% to-white to-92% pr-0.5">
        <svg width="9" height="9" viewBox="0 0 9 9" fill="#666" aria-hidden="true">
          <path d="M7 1h2v2H7zM7 4h2v2H7zM7 7h2v2H7zM4 4h2v2H4zM4 7h2v2H4zM1 7h2v2H1z" />
        </svg>
      </div>
    </section>
  );
}

function DefineWindow() {
  return (
    <section className="absolute top-[77px] right-[147px] bottom-[78px] left-[146px] flex flex-col border border-[#b9b9b9] bg-[#f3f3f3] shadow-[0_2px_14px_rgba(0,0,0,0.35)]">
      <div className="flex h-[28px] shrink-0 items-center justify-between bg-white pt-2 pr-[13px] pl-[11px]">
        <h2 className="text-sm">定义</h2>
        <div className="flex items-center gap-[18px]">
          <button type="button" aria-label="minimize" className="mt-2 h-px w-2.5 bg-[#555]" />
          <button type="button" aria-label="maximize" className="size-2.5 border border-[#555]" />
          <button type="button" aria-label="close">
            <Cross />
          </button>
        </div>
      </div>
      <div className="flex h-[31px] shrink-0 items-center gap-[11px] border-t border-b-2 border-[#c3c3c3] bg-white pt-px pl-0.5">
        <Select label="楼层" options={['首层']} className="h-[26px] w-[99px]" />
        <div className="-mx-2 h-5 border-l border-[#ddd]" />
        <div className="w-px" />
        <Tool icon={<Ico n="copy" />} label="层间复制" />
        <Tool icon={<Ico n="saveComp" s={15} />} label="构件存盘" caret />
        <div className="-ml-1">
          <Tool icon={<Ico n="affix" />} label="添加前后缀" />
        </div>
        <Tool icon={<Ico n="unused" />} label="删除未使用构件" />
        <div className="-mx-1 h-5 border-l border-[#ddd]" />
        <Tool icon={<Ico n="checkDoc" />} label="检查做法" />
        <Tool icon={<Ico n="autoDoc" />} label="自动套方案维护" />
        <Tool icon={<Ico n="batch" />} label="批量自动套做法" />
      </div>
      <div className="flex min-h-0 flex-1 overflow-hidden">
        <DefNav />
        <CompColumn />
        <PracticeColumn />
      </div>
    </section>
  );
}

/* ---------- 检查做法 window ---------- */

const tree: [number, string][] = [
  [0, '所有构件'], [1, '柱'], [2, '柱'], [2, '构造柱'], [1, '墙'], [2, '剪力墙'], [1, '门窗洞'], [2, '门'], [2, '窗'], [2, '门联窗'],
  [2, '墙洞'], [2, '带形窗'], [1, '梁'], [2, '梁'], [1, '板'], [2, '现浇板'], [2, '板洞'], [1, '其它'], [2, '栏板'],
];
const indent = ['pl-[13px]', 'pl-[33px]', 'pl-16'];
const issues = ['A-DZ1', 'A-KZ1', 'A-KZ2', 'A-KZ3'].flatMap((n) => [n, n, n, n, n]).concat(['KZa', 'KZa', 'KZa']);

function CheckWindow() {
  return (
    <section className="absolute top-[527px] -bottom-5 left-[396px] flex w-[802px] flex-col border border-[#b9b9b9] bg-[#fdfdfd] px-[11px] shadow-[0_2px_14px_rgba(0,0,0,0.4)]">
      <div className="flex h-10 shrink-0 items-center justify-between pb-0.5">
        <h2 className="text-sm">检查做法</h2>
        <div className="flex items-center gap-[18px] pr-px">
          <button type="button" aria-label="maximize" className="size-2.5 border border-[#555]" />
          <button type="button" aria-label="close">
            <Cross />
          </button>
        </div>
      </div>
      <div className="flex min-h-0 flex-1 gap-[5px]">
        <div className="flex w-[193px] shrink-0 justify-between overflow-hidden border border-[#c4c4c4] bg-white">
          <ul>
            {tree.map(([lv, t], i) => (
              <li key={i} className={`flex h-6 items-center gap-[3px] ${indent[lv]}`}>
                {lv < 2 && <TreeArrow />}
                <label className="flex items-center gap-[7px]">
                  <Check state="on" />
                  {t}
                </label>
              </li>
            ))}
          </ul>
          <div className="mt-3.5 mr-[3px] h-[325px] w-2 rounded-full bg-[#c9c9c9]" />
        </div>
        <div className="flex min-w-0 flex-1 justify-between overflow-hidden border border-[#c4c4c4] bg-white">
          <table className="w-[444px] table-fixed border-separate border-spacing-0 self-start">
            <colgroup>
              <col className="w-[71px]" />
              <col className="w-[71px]" />
              <col className="w-[151px]" />
              <col className="w-[151px]" />
            </colgroup>
            <thead>
              <tr className="bg-[#f0f0f0] [&>th]:h-[21px] [&>th]:border-r [&>th]:border-b [&>th]:border-[#bfbfbf] [&>th]:p-0 [&>th]:font-normal">
                <th>楼层</th>
                <th>类型</th>
                <th>构件名称</th>
                <th>问题描述</th>
              </tr>
            </thead>
            <tbody>
              {issues.map((n, i) => (
                <tr key={i} className="leading-[18px] [&>td]:h-[19px] [&>td]:border-r [&>td]:border-b [&>td]:border-[#d0d0d0] [&>td]:py-0 [&>td]:pr-0 [&>td]:pl-[3px]">
                  <td>屋面</td>
                  <td>柱</td>
                  <td>{n}</td>
                  <td>定额行：表达式错误</td>
                </tr>
              ))}
            </tbody>
          </table>
          <div className="mt-3.5 mr-[3px] h-[15px] w-2 rounded-full bg-[#c9c9c9]" />
        </div>
      </div>
      <div className="flex h-[46px] shrink-0 items-start justify-between pt-1.5">
        <label className="flex h-[26px] items-center gap-[3px] pl-px">
          <Check state="off" />
          不检查带单元的父构件
        </label>
        <button type="button" className="h-[28px] w-20 rounded-sm bg-[#2b7de1] text-white">
          刷新
        </button>
      </div>
    </section>
  );
}

/* ---------- taskbar ---------- */

function Taskbar() {
  const slot = 'relative flex h-10 w-12 items-center justify-center border-b-2';
  return (
    <footer className="z-10 flex h-10 shrink-0 items-center justify-between bg-gradient-to-r from-[#203840] via-[#283a44] to-[#1b2744] text-white">
      <div className="flex gap-px">
        <button type="button" aria-label="start" className={`${slot} mr-0.5 border-transparent`}>
          <svg width="16" height="16" viewBox="0 0 16 16" fill="#fff" aria-hidden="true">
            <path d="M0 2.300l6.500-.9v6.200H0zM7.300 1.300L16 0v7.600H7.300zM0 8.400h6.500v6.200L0 13.700zM7.300 8.400H16V16l-8.700-1.300z" />
          </svg>
        </button>
        <button type="button" aria-label="Edge" className={`${slot} border-[#76b9ed]`}>
          <svg width="24" height="24" viewBox="0 0 24 24" aria-hidden="true">
            <defs>
              <linearGradient id="edgeTop" x1="0" y1="0" x2="1" y2=".3">
                <stop offset="0" stopColor="#2a9fe0" />
                <stop offset="1" stopColor="#5fd65a" />
              </linearGradient>
            </defs>
            <circle cx="12" cy="12" r="12" fill="#1068b8" />
            <path d="M0 12A12 12 0 0 1 24 11q0 5-5 5.500-4 .3-4.500-1.500 1.500-1.500 1-4-1-4-6.500-4Q2 7.500 0 12z" fill="url(#edgeTop)" />
            <path d="M9 9q-4 4-1 9t9 5Q9 26 4 20.500T4 10q2-2 5-1z" fill="#1a8ad8" />
            <path d="M11 11q-2.500 3 .5 6.500t10 1q-3 5-8 3T8 15t3-4z" fill="#12489b" />
          </svg>
        </button>
        <button type="button" aria-label="files" className={`${slot} border-[#76b9ed]`}>
          <svg width="23" height="20" viewBox="0 0 23 20" aria-hidden="true">
            <path d="M0 1h9l2 3H0z" fill="#d99a18" />
            <path d="M0 3h22v15H0z" fill="#fbd26a" />
            <path d="M4 19v-8h14v8h-4v-4H8v4z" fill="#3a94dc" />
          </svg>
        </button>
        <button type="button" aria-label="documents" className={`${slot} border-[#76b9ed]`}>
          <svg width="24" height="24" viewBox="0 0 24 24" aria-hidden="true">
            <rect width="24" height="24" rx="5" fill="#18a0f8" />
            <rect x="4" y="4" width="15" height="16" rx="2" fill="#fff" />
            <path d="M7 8h9M7 12h5M7 16h4" stroke="#18a0f8" strokeWidth="1.500" />
            <path d="M15 18l-1 4M19 18l1 4" stroke="#fff" strokeWidth="2" />
            <circle cx="17" cy="15" r="4" fill="#fff" stroke="#18a0f8" strokeWidth="1.500" />
          </svg>
        </button>
        <button type="button" aria-label="CAD" className={`${slot} border-[#76b9ed]`}>
          <span className="flex size-6 items-center justify-center rounded-xs border border-[#aab4bf] bg-[#155fae] text-[10px] font-bold">CAD</span>
        </button>
        <button type="button" aria-label="WeChat" className={`${slot} border-[#ff7a10] bg-[#a96a36]`}>
          <svg width="25" height="22" viewBox="0 0 25 22" aria-hidden="true">
            <path d="M9 0c5 0 9 3.300 9 7.500S14 15 9 15q-2 0-3-.5L2.500 16l.7-3Q0 10.500 0 7.500C0 3.300 4 0 9 0z" fill="#2bd06c" />
            <ellipse cx="17.500" cy="13.500" rx="7.300" ry="6.200" fill="#f1f1f1" />
            <path d="M20 18l2.500 3.500-5-2z" fill="#f1f1f1" />
            <circle cx="6" cy="5.500" r="1.200" fill="#145c30" />
            <circle cx="12" cy="5.500" r="1.200" fill="#145c30" />
            <circle cx="15" cy="12" r="1" fill="#777" />
            <circle cx="20" cy="12" r="1" fill="#777" />
          </svg>
        </button>
        <button type="button" aria-label="WPS" className={`${slot} border-[#76b9ed]`}>
          <svg width="24" height="20" viewBox="0 0 24 20" aria-hidden="true">
            <path d="M0 1h10v3H5l3 8 3-8h3L8 19H6z" fill="#ee2a1e" />
            <path d="M12 1h12l-7 18h-2L10 8l2-4 4 9 3-9h-7z" fill="#fb4a2c" />
          </svg>
        </button>
        <button type="button" aria-label="GTJ" className={`${slot} border-[#76b9ed] bg-[#4f626d]`}>
          <span className="flex size-6 items-center justify-center rounded-sm bg-[#dff1fe]">
            <LogoT s={16} />
          </span>
        </button>
      </div>
      <div className="flex h-10 items-center">
        <svg width="14" height="8" viewBox="0 0 14 8" fill="none" stroke="#fff" strokeWidth="1.300" aria-hidden="true">
          <path d="M1 7l6-6 6 6" />
        </svg>
        <svg width="18" height="18" viewBox="0 0 18 18" fill="none" stroke="#fff" className="ml-2" aria-hidden="true">
          <path d="M2 3l13-1.500v13L2 16zM5 8q1-3 4-2.500M9 4v2H7M10 9q-1 3-4 3M6 14v-2h2" />
          <circle cx="13" cy="14" r="3.500" fill="#ff9d1c" stroke="none" />
        </svg>
        <svg width="14" height="16" viewBox="0 0 14 16" className="ml-2" aria-hidden="true">
          <path d="M7 0l6.500 2v6q0 5-6.500 8Q.5 13 .5 8V2z" fill="#f79a1d" />
          <path d="M8 3q3 3 2.500 6T7 13 3.500 9.500Q5 9 6 7t2-4z" fill="#fff" />
        </svg>
        <svg width="17" height="16" viewBox="0 0 17 16" fill="none" stroke="#fff" className="ml-2" aria-hidden="true">
          <path d="M5 3.500h11v8H5M1 1.500h4V5H1zM3 5v5M10.500 11.500V15M7 15h7" />
        </svg>
        <svg width="15" height="14" viewBox="0 0 15 14" fill="none" stroke="#fff" className="ml-[7px]" aria-hidden="true">
          <path d="M1 5v4h1.500L6 12.500v-11L2.500 5zM9 5l5 5M14 5l-5 5" />
        </svg>
        <span className="ml-[7px] text-base leading-none">英</span>
        <div className="ml-2.5 w-[60px] text-center leading-[19px]">
          <div>17:31:50</div>
          <div>2023/6/16</div>
        </div>
        <svg width="16" height="17" viewBox="0 0 16 17" fill="none" stroke="#fff" strokeWidth="1.200" className="ml-[18px]" aria-hidden="true">
          <path d="M1 1h14v11.500h-4.500L8 15.500l-2.500-3H1z" />
        </svg>
        <div className="mr-1 ml-5 h-10 border-l border-[#56607a]" />
      </div>
    </footer>
  );
}

export default function App() {
  return (
    <div className="flex h-screen flex-col overflow-hidden bg-white font-['Noto_Sans','Noto_Sans_CJK_SC',sans-serif] text-xs leading-4 text-[#2f2f2f]">
      <main className="relative flex min-h-0 flex-1 flex-col overflow-hidden">
        <TitleBar />
        <Ribbon />
        <div className="flex h-[27px] shrink-0 items-center gap-1 border-t border-[#d4d4d4] bg-[#f0f0f0] pl-0.5">
          <Select label="当前楼层" options={['首层']} className="h-[23px] w-[99px]" />
          <Select label="构件类别" options={['柱']} className="h-[23px] w-[99px]" />
        </div>
        <div className="flex min-h-0 flex-1 border-t border-[#d4d4d4] bg-[#f6f6f6]">
          <MainNav />
          <MainProps />
          <div className="mr-1 flex min-w-0 flex-1 flex-col bg-black">
            <div className="mt-auto h-[27px] bg-[#282828]" />
          </div>
          <DisplayPanel />
        </div>
        <div className="flex h-[31px] shrink-0 items-center bg-[#fcfcfc] pl-0.5 whitespace-nowrap">
          <span className="w-10">层高：</span>
          <span className="w-[50px]">4.5</span>
          <span className="w-10">标高：</span>
          <span className="w-[100px]">-0.05~4.45</span>
          <span className="w-[60px]">选中图元：</span>
          <span className="w-[50px]">0</span>
          <span>隐藏图元：</span>
        </div>
        <DefineWindow />
        <CheckWindow />
      </main>
      <Taskbar />
    </div>
  );
}
